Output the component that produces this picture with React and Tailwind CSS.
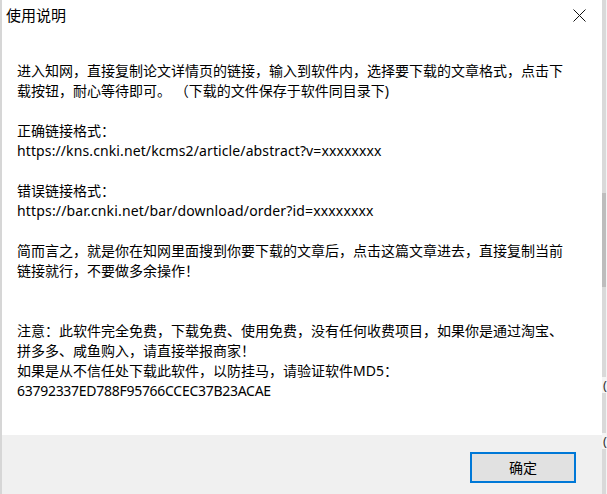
import React from "react";

const FONT = { fontFamily: '"Noto Sans", "Noto Sans CJK SC", sans-serif' };

// kind: "url" lines run a touch wider than Noto Sans, the hash a touch narrower
const LINES = [
  ["进入知网，直接复制论文详情页的链接，输入到软件内，选择要下载的文章格式，点击下"],
  ["载按钮，耐心等待即可。 （下载的文件保存于软件同目录下)"],
  [""],
  ["正确链接格式："],
  ["https://kns.cnki.net/kcms2/article/abstract?v=xxxxxxxx", "url"],
  [""],
  ["错误链接格式："],
  ["https://bar.cnki.net/bar/download/order?id=xxxxxxxx", "url2"],
  [""],
  ["简而言之，就是你在知网里面搜到你要下载的文章后，点击这篇文章进去，直接复制当前"],
  ["链接就行，不要做多余操作！"],
  [""],
  [""],
  ["注意：此软件完全免费，下载免费、使用免费，没有任何收费项目，如果你是通过淘宝、"],
  ["拼多多、咸鱼购入，请直接举报商家！"],
  ["如果是从不信任处下载此软件，以防挂马，请验证软件MD5："],
  ["63792337ED788F95766CCEC37B23ACAE", "hash"],
];

const KIND = {
  url: "tracking-[0.11px]",
  url2: "tracking-[0.16px]",
  hash: "tracking-[-0.28px]",
};

function CloseIcon() {
  return (
    <svg width="13" height="13" viewBox="0 0 13 13" fill="none" stroke="#111" strokeWidth="1">
      <path d="M0.5 0.5L12.5 12.5" />
      <path d="M12.5 0.5L0.5 12.5" />
    </svg>
  );
}

export default function App() {
  return (
    <div className="flex h-[494px] w-[607px] overflow-hidden bg-white text-black" style={FONT}>
      {/* left edge of window behind */}
      <div className="w-[2px] bg-[#d6d6d6]" />

      {/* dialog */}
      <div className="flex flex-1 flex-col">
        <div className="flex h-[30px] items-center justify-between pl-[4px] pr-[16px]">
          <span className="text-[15px] leading-[20px]">使用说明</span>
          <CloseIcon />
        </div>

        <div className="flex-1 pl-[15px] pt-[31px] text-[14px] leading-[20px]">
          {LINES.map(([text, kind], i) => (
            <div key={i} className={`h-[20px] whitespace-nowrap ${kind ? KIND[kind] : ""}`}>
              {text}
            </div>
          ))}
        </div>

        <div className="flex h-[59px] items-start justify-end bg-[#f0f0f0] pr-[26px] pt-[17px]">
          <button className="flex h-[31px] w-[106px] items-center justify-center border-2 border-[#0078d7] bg-[#e1e1e1] text-[14px]">
            确定
          </button>
        </div>
      </div>

      {/* window behind, right side */}
      <div className="flex w-[5px] flex-col overflow-hidden bg-[#f4f4f4]">
        <div className="h-[193px] w-[4px] bg-[#d9d9d9]" />
        <div className="h-[94px] w-[4px] bg-[#bdbdbd]" />
        <div className="h-[90px] w-[4px] bg-[#d9d9d9]" />
        <div className="pl-[1px] text-[13px] leading-[16px] text-[#333]">(</div>
        <div className="h-[40px] w-[4px] bg-[#d9d9d9]" />
        <div className="pl-[1px] text-[13px] leading-[16px] text-[#333]">(</div>
        <div className="flex-1 w-[4px] bg-[#d9d9d9]" />
      </div>
    </div>
  );
}
